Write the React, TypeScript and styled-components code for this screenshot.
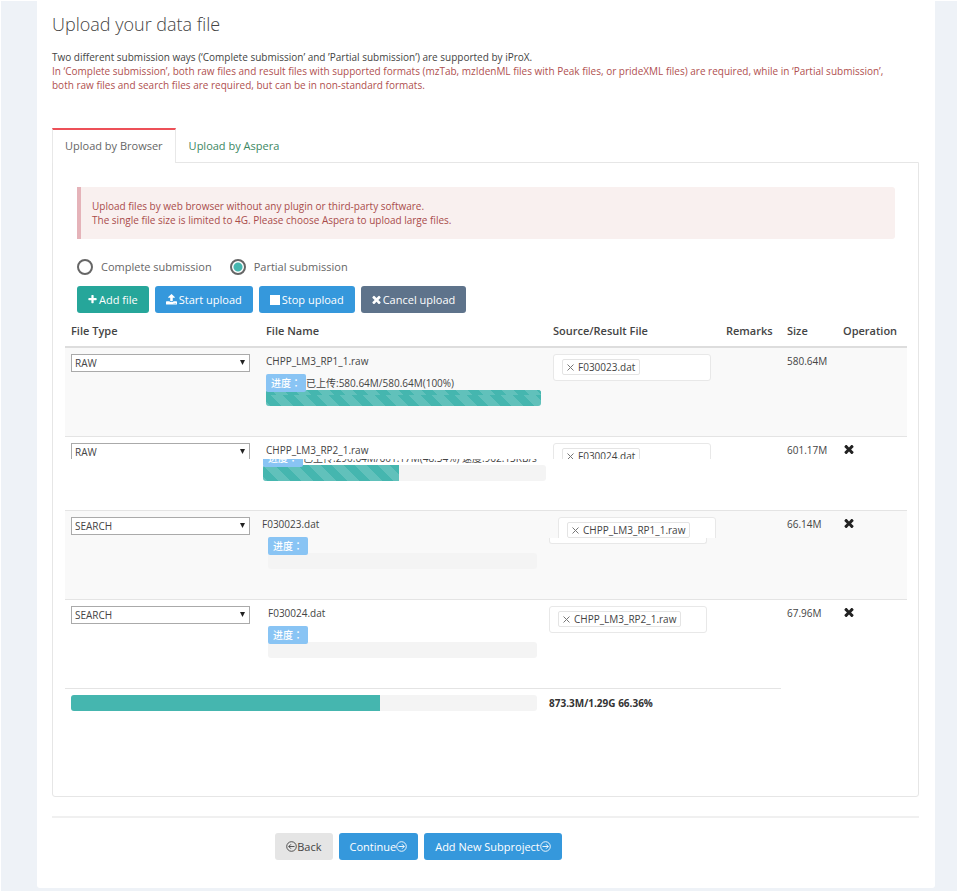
import React from "react";
import styled, { createGlobalStyle, css } from "styled-components";

const GlobalStyle = createGlobalStyle`
  * { box-sizing: border-box; }
  body {
    margin: 0;
    background: #eef2f7;
    font-family: "Open Sans", "Noto Sans CJK SC", sans-serif;
    font-size: 10px;
    line-height: 14px;
    color: #444;
  }
  button, select, input { font-family: inherit; }
`;

const Page = styled.div`
  border: 1px solid #fff;
  padding: 0 22px 3px 36px;
`;

const Card = styled.main`
  background: #fff;
  border-radius: 0 0 3px 3px;
  padding: 10px 16px 28px 15px;
`;

const Title = styled.h1`
  margin: 0;
  font-size: 18px;
  line-height: 26px;
  font-weight: 300;
  color: #444;
`;

const Intro = styled.p<{ $warn?: boolean }>`
  margin: 0;
  color: ${(p) => (p.$warn ? "#b0504f" : "#444")};
`;

const IntroBlock = styled.section`
  padding: 13px 0 36px;
`;

const TabBar = styled.div`
  display: flex;
  position: relative;
  margin-bottom: -1px;
`;

const Tab = styled.button<{ $active?: boolean }>`
  height: 35px;
  padding: 0 12px 2px;
  font-size: 11px;
  line-height: 16px;
  background: ${(p) => (p.$active ? "#fff" : "transparent")};
  border: 1px solid transparent;
  border-top: 2px solid transparent;
  border-bottom: 0;
  color: #3c8763;
  ${(p) =>
    p.$active &&
    css`
      color: #666;
      border-color: #e8e8e8;
      border-top-color: #ed5058;
    `}
`;

const Panel = styled.section`
  border: 1px solid #e6e6e6;
  border-radius: 0 0 3px 3px;
  padding: 24px 11px 85px 12px;
`;

const Inset = styled.div`
  padding: 0 12px;
`;

const Alert = styled.div`
  border-left: 4px solid #e5b3b9;
  border-radius: 0 3px 3px 0;
  background: #f9f0ef;
  color: #a94c4b;
  padding: 12px 11px;
`;

const Choices = styled.div`
  display: flex;
  gap: 18px;
  padding: 20px 0 11px;
`;

const Choice = styled.label`
  display: flex;
  align-items: center;
  gap: 8px;
  font-size: 11px;
  line-height: 16px;
  color: #666;
`;

const Radio = styled.input`
  appearance: none;
  width: 16px;
  height: 16px;
  margin: 0;
  border: 2px solid #666;
  border-radius: 50%;
  background: #fff;
  &:checked {
    background: radial-gradient(circle, #45b6af 0 4px, #fff 5px);
  }
`;

const Buttons = styled.div`
  display: flex;
  gap: 6px;
`;

const tones = {
  green: ["#26a69a", "#fff"],
  blue: ["#3598dc", "#fff"],
  slate: ["#5e738b", "#fff"],
  grey: ["#e5e5e5", "#444"],
};

const Button = styled.button<{ $tone: keyof typeof tones; $tight?: boolean }>`
  display: flex;
  align-items: center;
  gap: ${(p) => (p.$tight ? 0 : 2)}px;
  height: 27px;
  padding: 0 11px;
  border: 0;
  border-radius: 3px;
  font-size: 11px;
  background: ${(p) => tones[p.$tone][0]};
  color: ${(p) => tones[p.$tone][1]};
`;

const Table = styled.table`
  width: 100%;
  margin-top: 4px;
  table-layout: fixed;
  border-collapse: separate;
  border-spacing: 0;
`;

const Col = styled.col<{ $w?: number }>`
  width: ${(p) => (p.$w ? `${p.$w}px` : "auto")};
`;

const HeadCell = styled.th`
  height: 31px;
  padding: 0 6px 2px;
  border-bottom: 2px solid #ddd;
  text-align: left;
  font-size: 11px;
  font-weight: 600;
  color: #444;
  white-space: nowrap;
`;

const Row = styled.tr<{ $shaded?: boolean; $short?: boolean }>`
  height: ${(p) => (p.$short ? 74 : 89)}px;
  background: ${(p) => (p.$shaded ? "#f9f9f9" : "#fff")};
`;

const Cell = styled.td<{ $plain?: boolean; $flush?: boolean }>`
  padding: ${(p) => (p.$flush ? "6px 1px 0 2px" : "6px 6px 0")};
  border-bottom: 1px solid ${(p) => (p.$plain ? "transparent" : "#e4e4e4")};
  vertical-align: top;
  white-space: nowrap;
`;

const Crop = styled.div<{ $height?: number }>`
  ${(p) => p.$height && `height: ${p.$height}px; overflow: hidden;`}
`;

const SelectBox = styled.div`
  position: relative;
  width: 179px;
`;

const Select = styled.select`
  appearance: none;
  display: block;
  width: 100%;
  height: 18px;
  padding: 0 3px;
  border: 1px solid #aaa;
  border-radius: 0;
  background: #fff;
  font-size: 10px;
  line-height: 16px;
  color: #444;
`;

const Caret = styled.svg`
  position: absolute;
  right: 5px;
  top: 6px;
  width: 5px;
  height: 5px;
  pointer-events: none;
`;

const FileName = styled.div<{ $indent: number }>`
  padding-left: ${(p) => p.$indent}px;
`;

const Progress = styled.div<{ $left: number; $right: number; $cropped?: boolean }>`
  margin-top: ${(p) => (p.$cropped ? 2 : 6)}px;
  padding: 0 ${(p) => p.$right}px 0 ${(p) => p.$left}px;
`;

const Status = styled.div<{ $cropped?: boolean }>`
  position: relative;
  z-index: 1;
  display: flex;
  align-items: flex-end;
  height: ${(p) => (p.$cropped ? 8 : 18)}px;
  overflow: hidden;
  line-height: 18px;
`;

const Badge = styled.span`
  flex: none;
  width: 40px;
  height: 18px;
  padding-left: 5px;
  border-radius: 2px;
  background: #89c4f4;
  color: #fff;
  font-family: "Noto Sans CJK TC", sans-serif;
  font-weight: 500;
`;

const Track = styled.div`
  height: 16px;
  margin-top: -2px;
  border-radius: 3px;
  overflow: hidden;
  background: #f4f4f4;
`;

const stripes = css`
  background-color: #45b6af;
  background-image: linear-gradient(
    45deg,
    rgba(255, 255, 255, 0.15) 25%,
    transparent 25%,
    transparent 50%,
    rgba(255, 255, 255, 0.15) 50%,
    rgba(255, 255, 255, 0.15) 75%,
    transparent 75%
  );
  background-size: 23px 23px;
`;

const Fill = styled.div<{ $striped?: boolean; $seam?: boolean }>`
  height: 100%;
  background-color: #45b6af;
  ${(p) => p.$striped && stripes}
  ${(p) =>
    p.$seam &&
    css`
      &::before {
        content: "";
        display: block;
        height: 5px;
        ${stripes}
        background-position: 6px 0;
      }
    `}
`;

const TagField = styled.div<{ $indent: number }>`
  width: 158px;
  height: 27px;
  margin-left: ${(p) => p.$indent}px;
  padding: 4px 8px;
  border: 1px solid #e8e8e8;
  border-radius: 3px;
  background: #fff;
`;

const Tag = styled.span`
  display: flex;
  align-items: center;
  width: max-content;
  gap: 4px;
  height: 16px;
  padding: 0 4px;
  border: 1px solid #e4e4e4;
  border-radius: 2px;
`;

const Remove = styled.button`
  display: flex;
  padding: 0;
  border: 0;
  background: none;
  color: #777;
`;

const FieldEdge = styled.div`
  width: 158px;
  height: 6px;
  border: 1px solid #e8e8e8;
  border-top: 0;
  border-radius: 0 0 3px 3px;
  background: #fff;
`;

const Delete = styled.button`
  display: flex;
  padding: 1px;
  border: 0;
  background: none;
  color: #222;
`;

const TotalCell = styled.td`
  padding: 8px 10px 0 6px;
`;

const TotalText = styled.td`
  padding: 6px 2px 0;
  font-weight: 700;
  color: #333;
`;

const Rule = styled.hr`
  margin: 19px 0 15px;
  border: 0;
  border-top: 2px solid #f0f0f0;
`;

const Footer = styled.footer`
  display: flex;
  justify-content: center;
  gap: 6px;
  padding-right: 134px;
`;

const paths = {
  plus: "M1600 736v192q0 40-28 68t-68 28h-416v416q0 40-28 68t-68 28h-192q-40 0-68-28t-28-68v-416h-416q-40 0-68-28t-28-68v-192q0-40 28-68t68-28h416v-416q0-40 28-68t68-28h192q40 0 68 28t28 68v416h416q40 0 68 28t28 68z",
  times:
    "M1490 1322q0 40-28 68l-136 136q-28 28-68 28t-68-28l-294-294-294 294q-28 28-68 28t-68-28l-136-136q-28-28-28-68t28-68l294-294-294-294q-28-28-28-68t28-68l136-136q28-28 68-28t68 28l294 294 294-294q28-28 68-28t68 28l136 136q28 28 28 68t-28 68l-294 294 294 294q28 28 28 68z",
  upload:
    "M1344 1472q0-26-19-45t-45-19-45 19-19 45 19 45 45 19 45-19 19-45zm256 0q0-26-19-45t-45-19-45 19-19 45 19 45 45 19 45-19 19-45zm128-224v320q0 40-28 68t-68 28h-1472q-40 0-68-28t-28-68v-320q0-40 28-68t68-28h427q21 56 70.5 92t110.5 36h256q61 0 110.5-36t70.5-92h427q40 0 68 28t28 68zm-325-648q-17 40-59 40h-256v448q0 26-19 45t-45 19h-256q-26 0-45-19t-19-45v-448h-256q-42 0-59-40-17-39 14-69l448-448q18-19 45-19t45 19l448 448q31 30 14 69z",
  stop: "M128 128h1536v1536h-1536z",
};

const boxes = {
  plus: "192 128 1408 1536",
  times: "250 250 1292 1292",
  upload: "64 64 1664 1664",
  stop: "128 128 1536 1536",
};

function Glyph({ name, size = 10 }: { name: keyof typeof paths; size?: number }) {
  return (
    <svg width={size} height={size} viewBox={boxes[name]} fill="currentColor" aria-hidden>
      <path d={paths[name]} />
    </svg>
  );
}

function CircleArrow({ back }: { back?: boolean }) {
  return (
    <svg width="11" height="11" viewBox="0 0 22 22" fill="none" stroke="currentColor" strokeWidth="1.8" aria-hidden>
      <circle cx="11" cy="11" r="9.6" />
      <path d={back ? "M17 11H5.5M10 6.5L5.5 11l4.5 4.5" : "M5 11h11.5M12 6.5l4.5 4.5-4.5 4.5"} />
    </svg>
  );
}

type FileRow = {
  type: string;
  name: string;
  source: string;
  size: string;
  status?: string;
  percent: number;
  nameIndent: number;
  bar: [number, number];
  sourceIndent: number;
  cropped?: boolean;
  edge?: boolean;
  seam?: boolean;
  removable?: boolean;
};

const files: FileRow[] = [
  { type: "RAW", name: "CHPP_LM3_RP1_1.raw", source: "F030023.dat", size: "580.64M", status: "已上传:580.64M/580.64M(100%)", percent: 100, nameIndent: 4, bar: [4, 5], sourceIndent: 4, seam: true },
  { type: "RAW", name: "CHPP_LM3_RP2_1.raw", source: "F030024.dat", size: "601.17M", status: "已上传:290.64M/601.17M(48.34%) 速度:962.13KB/s", percent: 48, nameIndent: 4, bar: [1, 0], sourceIndent: 4, cropped: true, removable: true },
  { type: "SEARCH", name: "F030023.dat", source: "CHPP_LM3_RP1_1.raw", size: "66.14M", percent: 0, nameIndent: 0, bar: [6, 9], sourceIndent: 9, edge: true, removable: true },
  { type: "SEARCH", name: "F030024.dat", source: "CHPP_LM3_RP2_1.raw", size: "67.96M", percent: 0, nameIndent: 6, bar: [6, 9], sourceIndent: 0, removable: true },
];

function FileEntry({ file, index }: { file: FileRow; index: number }) {
  const last = index === files.length - 1;
  return (
    <Row $shaded={index % 2 === 0} $short={file.cropped}>
      <Cell>
        <Crop $height={file.cropped ? 16 : undefined}>
          <SelectBox>
            <Select defaultValue={file.type} aria-label={`File type of ${file.name}`}>
              <option>RAW</option>
              <option>SEARCH</option>
            </Select>
            <Caret viewBox="0 0 6 6" aria-hidden>
              <path d="M0 0h6L3 6z" fill="#222" />
            </Caret>
          </SelectBox>
        </Crop>
      </Cell>
      <Cell $flush>
        <FileName $indent={file.nameIndent}>{file.name}</FileName>
        <Progress $left={file.bar[0]} $right={file.bar[1]} $cropped={file.cropped}>
          <Status $cropped={file.cropped}>
            <Badge>进度：</Badge>
            <span>{file.status}</span>
          </Status>
          <Track>
            <Fill $striped $seam={file.seam} style={{ width: `${file.percent}%` }} />
          </Track>
        </Progress>
      </Cell>
      <Cell $flush>
        <Crop $height={file.cropped ? 16 : file.edge ? 21 : undefined}>
          <TagField $indent={file.sourceIndent}>
            <Tag>
              <Remove aria-label={`Remove ${file.source}`}>
                <svg width="7" height="7" viewBox="0 0 7 7" stroke="currentColor" aria-hidden>
                  <path d="M.5.5l6 6M6.5.5l-6 6" />
                </svg>
              </Remove>
              {file.source}
            </Tag>
          </TagField>
        </Crop>
        {file.edge && <FieldEdge />}
      </Cell>
      <Cell />
      <Cell $plain={last}>{file.size}</Cell>
      <Cell $plain={last}>
        {file.removable && (
          <Delete aria-label={`Delete ${file.name}`}>
            <Glyph name="times" />
          </Delete>
        )}
      </Cell>
    </Row>
  );
}

export default function App() {
  return (
    <Page>
      <GlobalStyle />
      <Card>
        <Title>Upload your data file</Title>
        <IntroBlock>
          <Intro>Two different submission ways (‘Complete submission’ and ’Partial submission’) are supported by iProX.</Intro>
          <Intro $warn>
            In ‘Complete submission’, both raw files and result files with supported formats (mzTab, mzIdenML files with Peak files, or prideXML files) are required, while in ‘Partial submission’,
            <br />
            both raw files and search files are required, but can be in non-standard formats.
          </Intro>
        </IntroBlock>
        <TabBar role="tablist">
          <Tab role="tab" aria-selected $active>Upload by Browser</Tab>
          <Tab role="tab" aria-selected={false}>Upload by Aspera</Tab>
        </TabBar>
        <Panel>
          <Inset>
            <Alert>
              Upload files by web browser without any plugin or third-party software.
              <br />
              The single file size is limited to 4G. Please choose Aspera to upload large files.
            </Alert>
            <Choices>
              <Choice>
                <Radio type="radio" name="mode" />
                Complete submission
              </Choice>
              <Choice>
                <Radio type="radio" name="mode" defaultChecked />
                Partial submission
              </Choice>
            </Choices>
            <Buttons>
              <Button $tone="green"><Glyph name="plus" size={9} />Add file</Button>
              <Button $tone="blue"><Glyph name="upload" size={11} />Start upload</Button>
              <Button $tone="blue"><Glyph name="stop" />Stop upload</Button>
              <Button $tone="slate"><Glyph name="times" size={9} />Cancel upload</Button>
            </Buttons>
          </Inset>
          <Table>
            <colgroup>
              <Col $w={195} />
              <Col />
              <Col $w={173} />
              <Col $w={61} />
              <Col $w={56} />
              <Col $w={70} />
            </colgroup>
            <thead>
              <tr>
                <HeadCell>File Type</HeadCell>
                <HeadCell>File Name</HeadCell>
                <HeadCell>Source/Result File</HeadCell>
                <HeadCell>Remarks</HeadCell>
                <HeadCell>Size</HeadCell>
                <HeadCell>Operation</HeadCell>
              </tr>
            </thead>
            <tbody>
              {files.map((file, i) => (
                <FileEntry key={file.name} file={file} index={i} />
              ))}
            </tbody>
            <tfoot>
              <tr>
                <TotalCell colSpan={2}>
                  <Track>
                    <Fill style={{ width: "66.36%" }} />
                  </Track>
                </TotalCell>
                <TotalText colSpan={4}>873.3M/1.29G 66.36%</TotalText>
              </tr>
            </tfoot>
          </Table>
        </Panel>
        <Rule />
        <Footer>
          <Button $tone="grey" $tight><CircleArrow back />Back</Button>
          <Button $tone="blue" $tight>Continue<CircleArrow /></Button>
          <Button $tone="blue" $tight>Add New Subproject<CircleArrow /></Button>
        </Footer>
      </Card>
    </Page>
  );
}
